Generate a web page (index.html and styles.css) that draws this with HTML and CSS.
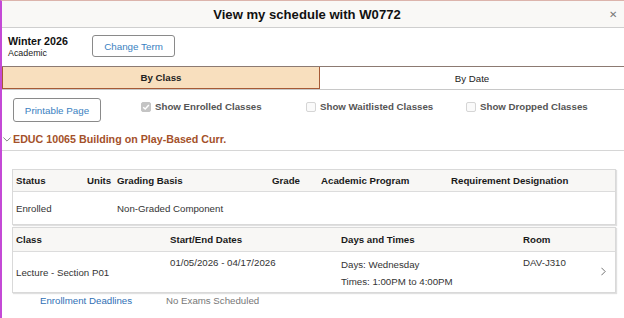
FILE: index.html
```html
<!DOCTYPE html>
<html>
<head>
<meta charset="utf-8">
<link rel="stylesheet" href="styles.css">
</head>
<body>
<div class="page">
  <header class="hdr">
    <h1 class="title">View my schedule with W0772</h1>
    <span class="close">&#x2715;</span>
  </header>
  <div class="term">
    <div class="term-info">
      <div class="term-name">Winter 2026</div>
      <div class="term-career">Academic</div>
    </div>
    <button class="btn btn-term">Change Term</button>
  </div>
  <div class="tabs">
    <div class="tab active">By Class</div>
    <div class="tab">By Date</div>
  </div>
  <div class="filters">
    <button class="btn btn-print">Printable Page</button>
    <label class="chk chk1"><span class="box checked"><svg viewBox="0 0 10 10" width="8" height="8"><path d="M1.5 5.2 L4 7.6 L8.6 2.4" fill="none" stroke="#fff" stroke-width="1.8"/></svg></span>Show Enrolled Classes</label>
    <label class="chk chk2"><span class="box"></span>Show Waitlisted Classes</label>
    <label class="chk chk3"><span class="box"></span>Show Dropped Classes</label>
  </div>
  <div class="course">
    <svg class="chev-down" viewBox="0 0 10 6" width="8" height="5"><path d="M0.5 0.5 L5 5 L9.5 0.5" fill="none" stroke="#666" stroke-width="1"/></svg>
    <span class="course-title">EDUC 10065 Building on Play-Based Curr.</span>
  </div>
  <div class="card t1">
    <div class="row head g1">
      <span>Status</span><span>Units</span><span>Grading Basis</span><span>Grade</span><span>Academic Program</span><span>Requirement Designation</span>
    </div>
    <div class="row body g1 r1">
      <span>Enrolled</span><span></span><span>Non-Graded Component</span><span></span><span></span><span></span>
    </div>
  </div>
  <div class="card t2">
    <div class="row head g2">
      <span>Class</span><span>Start/End Dates</span><span>Days and Times</span><span>Room</span>
    </div>
    <div class="row body g2 r2">
      <span class="mid">Lecture - Section P01</span>
      <span>01/05/2026 - 04/17/2026</span>
      <span class="dt"><span>Days: Wednesday</span><span>Times: 1:00PM to 4:00PM</span></span>
      <span>DAV-J310</span>
      <svg class="chev-right" viewBox="0 0 6 10" width="5" height="9"><path d="M0.5 0.5 L5 5 L0.5 9.5" fill="none" stroke="#555" stroke-width="1"/></svg>
    </div>
  </div>
  <div class="foot">
    <a class="link">Enrollment Deadlines</a>
    <span class="noexam">No Exams Scheduled</span>
  </div>
</div>
</body>
</html>
```

FILE: styles.css
```css
* { box-sizing: border-box; }
html, body { margin: 0; padding: 0; background: #fff; }
body {
  font-family: "Liberation Sans", Arial, sans-serif;
  color: #222;
  width: 624px;
  height: 318px;
  overflow: hidden;
}
.page {
  border-left: 2px solid #c44ad6;
  border-top: 1px solid #dcb4ac;
  height: 318px;
}
.hdr {
  height: 27px;
  background: #f9f8f6;
  border-bottom: 1px solid #cfcfcf;
  display: flex;
  align-items: center;
  justify-content: center;
  position: relative;
}
.title {
  margin: 0;
  font-size: 13.1px;
  font-weight: bold;
  color: #111;
  margin-left: -12px;
}
.close {
  position: absolute;
  right: 7px;
  top: 8px;
  font-size: 10px;
  color: #777;
}
.btn {
  font-family: "Liberation Sans", Arial, sans-serif;
  background: #fff;
  border: 1px solid #8a8a8a;
  border-radius: 3px;
  color: #3a7fc1;
  font-size: 9.8px;
  padding: 0;
}
.term {
  display: flex;
  align-items: center;
  height: 39px;
  padding-left: 6px;
  border-bottom: 1px solid #8c7a72;
}
.term-info { width: 84px; }
.term-name { font-size: 10.7px; font-weight: bold; color: #111; line-height: 13px; }
.term-career { font-size: 8.9px; color: #222; line-height: 11px; }
.btn-term { width: 83px; height: 22px; margin-top: -2px; }
.tabs {
  display: flex;
  height: 23px;
  border-bottom: 1px solid #c8c8c8;
}
.tab {
  flex: 0 0 318px;
  display: flex;
  align-items: center;
  justify-content: center;
  font-size: 9.7px;
  color: #222;
}
.tab.active {
  background: #f8dfbe;
  border: 1px solid #a65a36;
  border-top: none;
  font-weight: bold;
  color: #222;
}
.tab + .tab { flex: 1; }
.filters {
  display: flex;
  align-items: flex-start;
  height: 37px;
  padding-top: 8px;
  padding-left: 11px;
}
.btn-print { width: 88px; height: 24px; flex: none; }
.chk {
  display: flex;
  align-items: center;
  font-size: 9.7px;
  font-weight: bold;
  color: #555;
  margin-top: 3px;
  white-space: nowrap;
  flex: none;
}
.box {
  width: 10px;
  height: 10px;
  border: 1px solid #d5d5d5;
  border-radius: 2px;
  background: #fafafa;
  margin-right: 4px;
  display: flex;
  align-items: center;
  justify-content: center;
}
.box.checked { background: #c4c4c4; border-color: #c4c4c4; }
.chk1 { margin-left: 40px; width: 165px; }
.chk2 { width: 160px; }
.course {
  display: flex;
  align-items: center;
  height: 24px;
  padding-left: 1px;
  border-bottom: 1px solid #d6d6d6;
}
.chev-down { margin-right: 2px; margin-top: 1px; }
.course-title {
  font-size: 10.7px;
  font-weight: bold;
  color: #a4512a;
}
.card {
  margin-left: 10px;
  width: 604px;
  border: 1px solid #d9d9d9;
  box-shadow: 1px 1px 1px rgba(0,0,0,0.12);
  font-size: 9.7px;
}
.t1 { margin-top: 18px; }
.t2 { margin-top: 2px; }
.row { display: grid; padding-left: 3px; }
.head {
  background: #f8f7f5;
  border-bottom: 1px solid #dcdcdc;
  font-weight: bold;
  color: #1a1a1a;
  align-items: center;
}
.body { color: #333; position: relative; }
.g1 { grid-template-columns: 71px 30px 155px 49px 130px 1fr; }
.g2 { grid-template-columns: 154px 171px 182px 1fr; }
.t1 .head { height: 22px; }
.r1 { height: 32px; align-items: center; }
.t2 .head { height: 24px; }
.r2 { height: 40px; padding-top: 5px; }
.r2 .mid { align-self: center; margin-top: -5px; }
.dt { display: flex; flex-direction: column; gap: 6px; padding-top: 2px; }
.chev-right { position: absolute; right: 9px; top: 15px; }
.foot {
  display: flex;
  padding-top: 2px;
  padding-left: 38px;
  font-size: 9.7px;
}
.link { color: #2f70b5; width: 126px; }
.noexam { color: #777; }
```
